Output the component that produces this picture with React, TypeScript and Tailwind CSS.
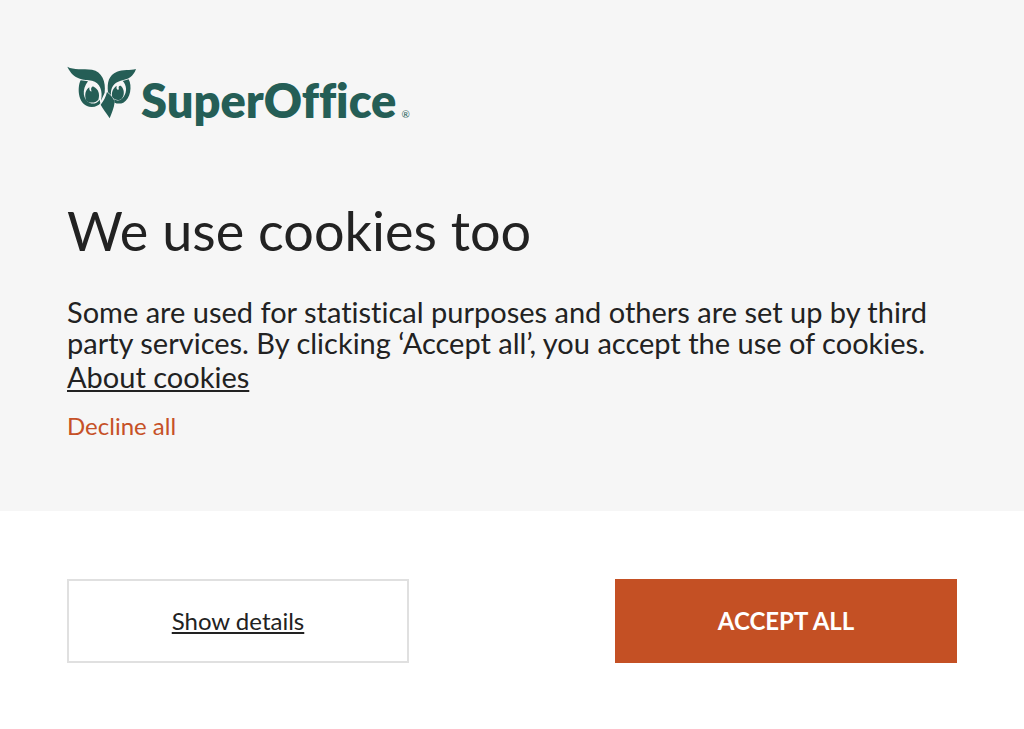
export default function App() {
  return (
    <main className="min-h-screen bg-white font-['Lato',sans-serif] text-[#222222] [font-variant-ligatures:none]">
      <section className="bg-[#f6f6f6] px-[67px] pt-[66px] pb-[67px]">
        <div className="flex items-start gap-[5px]">
          <svg viewBox="21 18 207 159" className="h-[53px] w-[69px]" fill="#255e56" aria-hidden="true">
            <path d="M22 20C42 31 68 25 96 29C126 35 138 64 134 98L123 122C129 92 120 68 96 62C72 58 42 62 22 20Z" />
            <path d="M228 27C211 32 188 28 171 35C146 46 141 66 144 97L153 105C151 84 161 68 182 62C205 58 220 50 228 27Z" />
            <path d="M62 61C50 84 54 141 95 141C108 141 116 136 121 130L119 119C111 131 99 133 90 129C69 121 64 89 84 64Z" />
            <path d="M206 58C217 77 212 117 190 128C181 132 170 131 164 128L162 118C173 125 184 120 191 110C202 95 200 75 188 63Z" />
            <path d="M79 122C72 104 77 89 88 82C87 91 91 96 95 94C91 86 95 78 101 80C115 86 121 103 115 119C106 130 88 130 79 122Z" />
            <path d="M157 112C153 98 159 84 170 77C168 87 172 91 177 88C174 82 177 76 183 78C193 86 195 106 185 116C178 122 165 121 157 112Z" />
            <path d="M141 96C151 105 162 116 164 126C162 144 155 160 149 175C138 157 127 145 122 134C130 124 138 111 141 96Z" />
          </svg>
          <span className="text-[47px] leading-[68px] font-extrabold text-[#255e56]">SuperOffice</span>
          <span className="pt-[40px] text-[10px] leading-[16px] text-[#255e56]">®</span>
        </div>
        <h1 className="mt-[64px] text-[54px] leading-[66px]">We use cookies too</h1>
        <p className="mt-[32px] text-[29px] leading-[31px]">
          Some are used for statistical purposes and others are set up by third party services. By clicking ‘Accept all’, you accept the use of cookies.
        </p>
        <a href="#about" className="block text-[29px] leading-[38px] underline">About cookies</a>
        <button className="mt-[12px] block text-[24px] leading-[36px] text-[#c65127]">Decline all</button>
      </section>
      <section className="flex justify-between px-[67px] pt-[68px]">
        <button className="h-[84px] w-[342px] border-2 border-[#e0e0e0] text-[24px] underline">Show details</button>
        <button className="h-[84px] w-[342px] bg-[#c45024] text-[24px] font-bold text-white">ACCEPT ALL</button>
      </section>
    </main>
  );
}
